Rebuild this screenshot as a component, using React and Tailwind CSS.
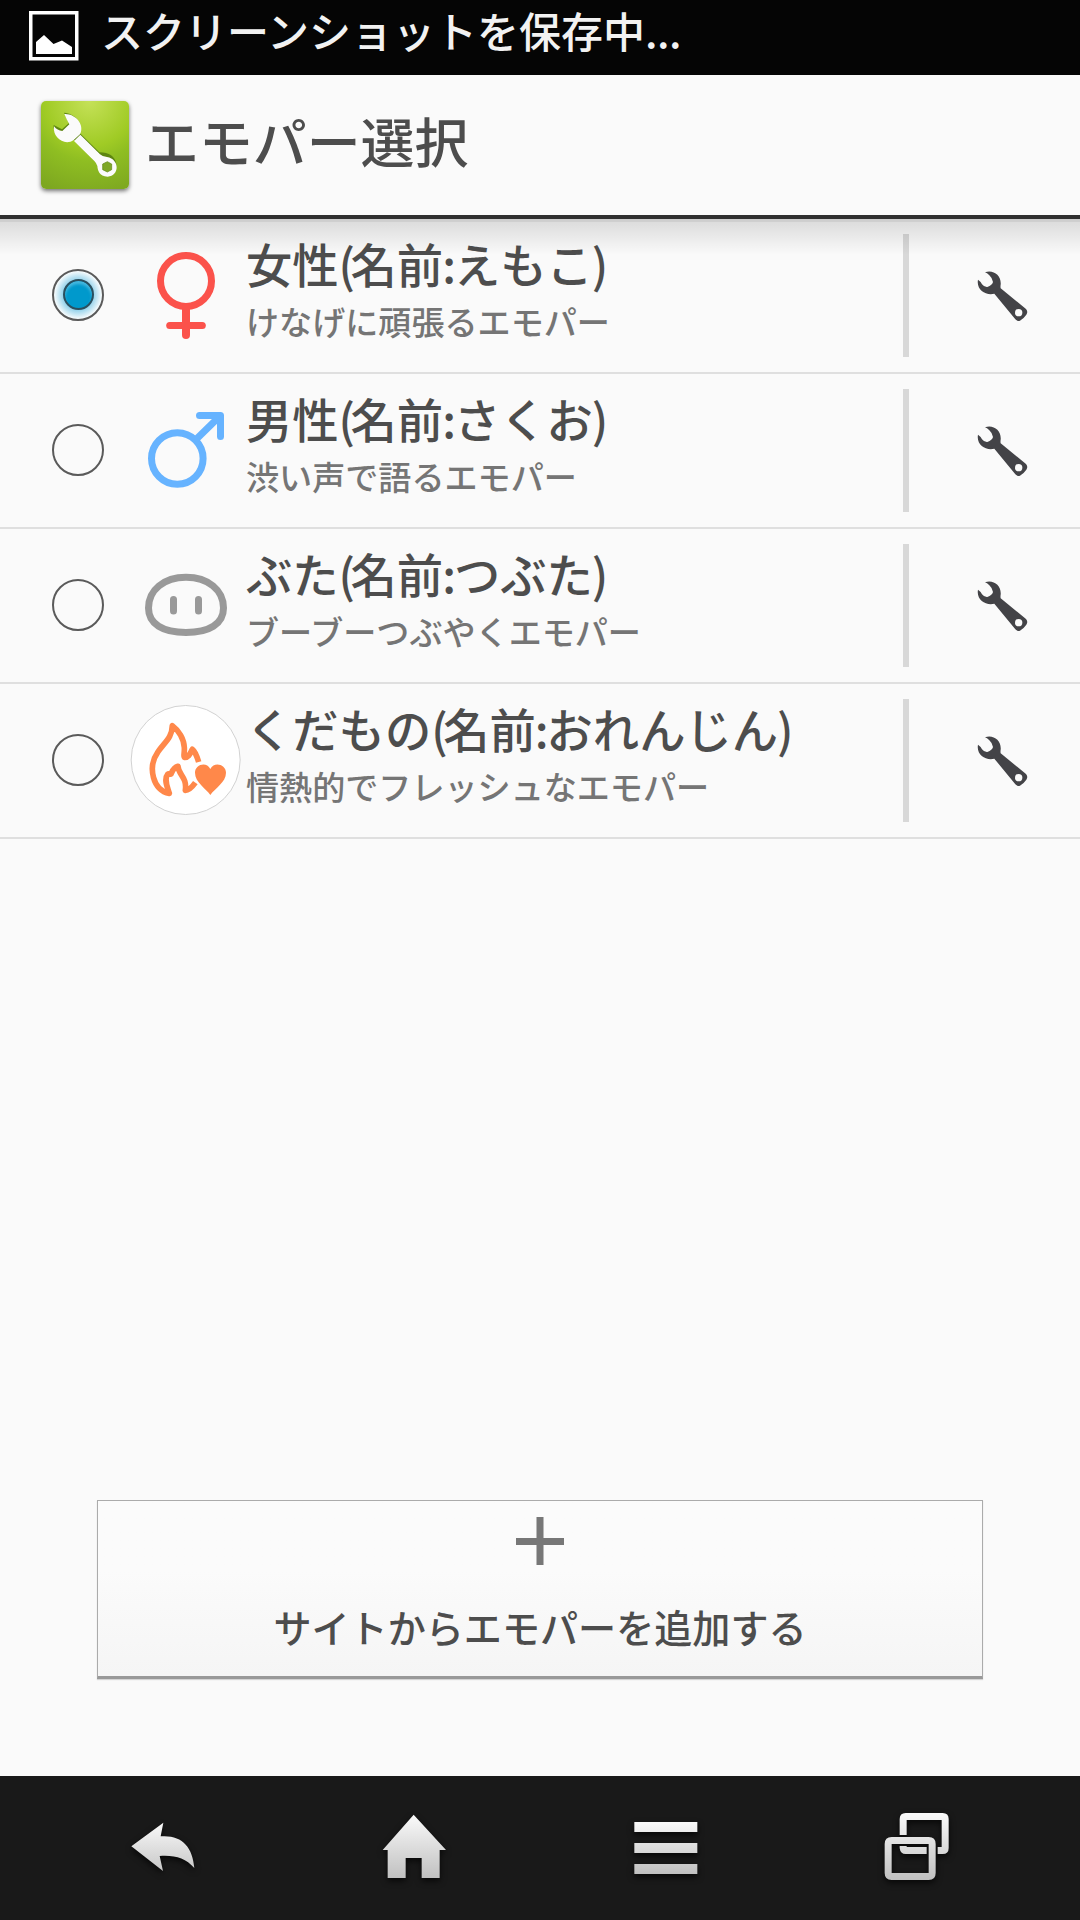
const rows = [
  { id: 'emoko', type: '女性', name: 'えもこ', note: 'けなげに頑張るエモパー', Icon: FemaleIcon, selected: true },
  { id: 'sakuo', type: '男性', name: 'さくお', note: '渋い声で語るエモパー', Icon: MaleIcon },
  { id: 'tsubuta', type: 'ぶた', name: 'つぶた', note: 'ブーブーつぶやくエモパー', Icon: PigIcon },
  { id: 'orenjin', type: 'くだもの', name: 'おれんじん', note: '情熱的でフレッシュなエモパー', Icon: FlameIcon },
];

function FemaleIcon() {
  return (
    <svg width="111" height="111" fill="none" stroke="#fb524b" strokeWidth="7" strokeLinecap="round">
      <circle cx="56" cy="41" r="25.5" />
      <path d="M56 67V95" strokeWidth="8" />
      <path d="M39.700 85.500H72.300" />
    </svg>
  );
}

function MaleIcon() {
  return (
    <svg width="111" height="111" fill="none" stroke="#66b3ff" strokeWidth="7" strokeLinecap="round" strokeLinejoin="round">
      <circle cx="47.300" cy="63.500" r="25.800" />
      <path d="M67.500 43L90 21M69.500 20.500H90.500V41.500" />
    </svg>
  );
}

function PigIcon() {
  return (
    <svg width="111" height="111" fill="none" stroke="#999" strokeWidth="7" strokeLinecap="round">
      <path d="M56 27.300C78 27.300 93.500 40 93.500 58C93.500 74 79 82.500 56 82.500S18.500 74 18.500 58C18.500 40 34 27.300 56 27.300Z" />
      <path d="M43.500 49.500V61M68.500 49.500V61" />
    </svg>
  );
}

function FlameIcon() {
  return (
    <svg width="111" height="111" viewBox="30 30 333 333">
      <circle cx="197" cy="195" r="163.500" fill="#fff" stroke="#d2d2d2" strokeWidth="3" />
      <g fill="none" stroke="#ff884a" strokeWidth="17" strokeLinejoin="round">
        <path d="M236 201C230 181 224 168 217 163C211 174 207 188 194 187C189 185 194 176 193 158C192 131 176 106 157 92C156 131 132 142 113 172C82 216 99 288 148 295C142 276 131 253 143 238C147 234 151 239 153 237C157 229 160 218 174 214C175 239 202 247 196 286C206 286 216 277 226 263" />
      </g>
      <path d="M271 300C258 280 225 262 225 233C225 209 259 198 271 222C283 198 318 209 318 233C318 262 284 280 271 300Z" fill="#ff884a" />
    </svg>
  );
}

function SettingsIcon() {
  return (
    <svg width="171" height="153" viewBox="87 -3 513 459">
      <path
        d="M315 157C341 148 365 168 362 194Q361 199 362 205L438 267Q445 275 439 284Q430 297 420 302Q412 305 406 298L343 221C318 228 288 209 294 179Q302 184 306 193Q313 202 322 201Q337 195 339 186Q337 174 328 166Q321 159 315 157Z"
        fill="#434347"
      />
      <circle cx="416" cy="278" r="11" fill="#fafafa" />
    </svg>
  );
}

function AppIcon() {
  return (
    <div className="w-[88px] h-[88px] rounded-[5px] overflow-hidden bg-[radial-gradient(circle_at_55%_0%,#c5e158_0px,#a0cb25_45px,#8fbe22_60px,#7da720_95px)] shadow-[0_2px_4px_rgba(0,0,0,0.55)]">
      <svg width="88" height="88" viewBox="64 64 264 264">
        <g fill="#5d8511" transform="translate(-1 -4)">
          <path d="M134 103C168 105 192 136 181 165L165 183C135 199 99 172 103 140L128 153L149 134Z" />
          <path d="M163 183L182 165L240 222Q285 223 291 257C294 300 240 303 234 256Z" />
        </g>
        <path d="M134 103C168 101 196 136 181 164L162 181C135 201 97 172 103 140Q113 153 128 154L149 134Q140 118 134 103Z" fill="#fbfbfb" />
        <path
          d="M163 184L182 165L241 224Q247 230 262 232C301 239 300 288 264 291C238 291 234 270 233 259Q231 251 224 244Z"
          fill="#fbfbfb"
        />
        <path d="M263 246L276 253V270L263 277L249 270V253Z" fill="#7fa827" stroke="#5d8511" strokeWidth="2" />
      </svg>
    </div>
  );
}

function Radio({ checked }) {
  return (
    <span
      className={
        checked
          ? 'flex items-center justify-center w-[52px] h-[52px] -mt-[2px] rounded-full border-2 border-[#5a5a5a] bg-[radial-gradient(closest-side,#8fd0ea_60%,#f4fafc_98%)]'
          : 'w-[52px] h-[52px] -mt-[2px] rounded-full border-2 border-[#5a5a5a]'
      }
    >
      {checked && (
        <span className="w-[31px] h-[31px] rounded-full border-2 border-[#2b4f5e] bg-[#0099cc] shadow-[inset_0_3px_3px_rgba(120,205,235,0.6)]" />
      )}
    </span>
  );
}

function Row({ row }) {
  const { Icon } = row;
  return (
    <li className="flex items-center h-[155px] border-b-2 border-[#dfdfdf] pl-[52px]">
      <Radio checked={row.selected} />
      <span className="ml-[26px]"><Icon /></span>
      <div className="flex-1 self-start pt-3 pl-[5px] whitespace-nowrap">
        <p className="text-[46.3px] leading-[64px] text-[#4d4d4d]">
          {row.type}
          <span className="-tracking-[4.5px]">(</span>
          名前
          <span className="-ml-[1px] -tracking-[2px]">:</span>
          {row.name}
          <span className="-ml-[1px]">)</span>
        </p>
        <p className="pt-px text-[33.1px] leading-[50px] text-[#757575]">{row.note}</p>
      </div>
      <span className="w-[6px] h-[123px] bg-[#d8d8d8]" />
      <SettingsIcon />
    </li>
  );
}

// Shared light-to-grey fill of the navigation keys
function NavKey({ viewBox, top, bottom, children }) {
  const id = `key-${viewBox.split(' ')[0]}`;
  return (
    <div className="flex-1 flex justify-center">
      <svg width="100" height="144" viewBox={viewBox} fill={`url(#${id})`} className="drop-shadow-[0_3px_3px_rgba(0,0,0,0.7)]">
        <defs>
          <linearGradient id={id} gradientUnits="userSpaceOnUse" x1="0" y1={top} x2="0" y2={bottom}>
            <stop offset="0" stopColor="#fafafa" />
            <stop offset="1" stopColor="#c0c0c0" />
          </linearGradient>
        </defs>
        {children}
      </svg>
    </div>
  );
}

export default function App() {
  return (
    <div className="flex flex-col w-[1080px] h-[1920px] bg-[#fafafa] font-medium font-['Noto_Sans_CJK_JP',sans-serif]">
      {/* Status bar */}
      <div className="flex h-[75px] bg-[#050505] pl-[29px] flex-shrink-0">
        <svg width="50" height="50" className="mt-[11px]">
          <rect x="1.750" y="1.750" width="46" height="46" fill="none" stroke="#fff" strokeWidth="3.500" />
          <path d="M7 43V31L15 24L24.500 33L33 29.500L43 36V43Z" fill="#fff" />
        </svg>
        <p className="ml-[22px] text-[42px] leading-[60px] text-[#f2f2f2]">
          スクリーンショットを保存中<span className="-tracking-[0.500px]">...</span>
        </p>
      </div>

      {/* Title bar */}
      <header className="flex h-[144px] pl-[41px] border-b-4 border-[#2f2f2f] flex-shrink-0">
        <div className="mt-[26px]"><AppIcon /></div>
        <h1 className="ml-[16px] text-[53.900px] leading-[129px] text-[#4d4d4d]">エモパー選択</h1>
      </header>

      <main className="relative flex flex-col flex-1">
        <ul>
          {rows.map((row) => (
            <Row key={row.id} row={row} />
          ))}
        </ul>
        <div className="absolute top-0 inset-x-0 h-9 border-t-[3px] border-black/6 bg-linear-to-b from-black/13 to-transparent bg-origin-border" />

        <button className="flex flex-col items-center w-[886px] h-[179px] mt-auto mb-[97px] mx-auto border border-b-[3px] border-[#ababab] border-b-[#999] bg-linear-to-b from-[#fbfbfb] from-40% to-[#f5f5f5] shadow-[0_1px_1px_rgba(0,0,0,0.15)]">
          <svg width="48" height="48" className="mt-4 mr-px" stroke="#777" strokeWidth="7">
            <path d="M24 0V48M0 24.500H48" />
          </svg>
          <span className="mt-[33px] text-[38.100px] leading-[57px] text-[#4d4d4d]">サイトからエモパーを追加する</span>
        </button>
      </main>

      {/* Navigation keys */}
      <nav className="flex h-[144px] px-[37px] bg-[#191919] flex-shrink-0">
        <NavKey viewBox="38 18 300 432" top={155} bottom={325}>
          <path d="M93 229L189 158L181 199C244 194 277 230 282 294C255 264 224 255 178 258L188 303Z" />
        </NavKey>
        <NavKey viewBox="793 18 300 432" top={135} bottom={325}>
          <path d="M942 134L1039 240H1020V324H966V264H918V324H864V240H849Z" />
        </NavKey>
        <NavKey viewBox="47 18 300 432" top={155} bottom={312}>
          <path d="M102 156H291V186H102ZM102 219H291V249H102ZM102 282H291V312H102Z" />
        </NavKey>
        <NavKey viewBox="802 18 300 432" top={130} bottom={330}>
          <path d="M900 195V147Q900 129 918 129H1029Q1047 129 1047 147V234Q1047 252 1029 252H1014V231H1026V150H921V195Z" />
          <path d="M900 228H921V231H981V252H918Q902 252 900 234Z" />
          <path fillRule="evenodd" d="M876 201H987Q1008 201 1008 222V309Q1008 330 987 330H876Q855 330 855 309V222Q855 201 876 201ZM876 222V309H987V222Z" />
        </NavKey>
      </nav>
    </div>
  );
}
